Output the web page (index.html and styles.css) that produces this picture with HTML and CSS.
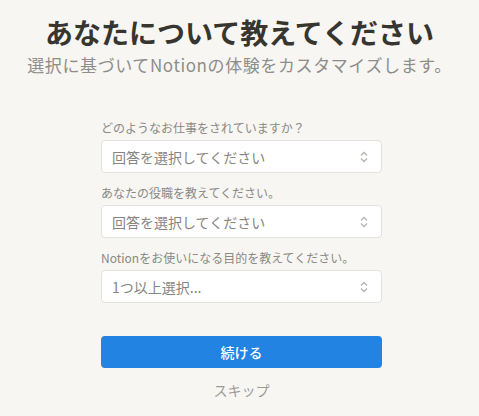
FILE: index.html
```html
<!DOCTYPE html>
<html lang="ja">
<head>
    <meta charset="UTF-8">
    <meta name="viewport" content="width=device-width, initial-scale=1.0">
    <title>あなたについて教えてください</title>
    <link rel="stylesheet" href="styles.css">
</head>
<body>
    <div class="page">
        <h1 class="title">あなたについて教えてください</h1>
        <p class="subtitle">選択に基づいてNotionの体験をカスタマイズします。</p>

        <form class="survey">
            <div class="field">
                <label class="field-label">どのようなお仕事をされていますか？</label>
                <div class="select">
                    <span>回答を選択してください</span>
                    <svg class="chevrons" width="10" height="12" viewBox="0 0 10 12"><path d="M2 4.5L5 1.5L8 4.5M2 7.5L5 10.5L8 7.5" fill="none" stroke="#b4b3b0" stroke-width="1.3"/></svg>
                </div>
            </div>
            <div class="field">
                <label class="field-label">あなたの役職を教えてください。</label>
                <div class="select">
                    <span>回答を選択してください</span>
                    <svg class="chevrons" width="10" height="12" viewBox="0 0 10 12"><path d="M2 4.5L5 1.5L8 4.5M2 7.5L5 10.5L8 7.5" fill="none" stroke="#b4b3b0" stroke-width="1.3"/></svg>
                </div>
            </div>
            <div class="field">
                <label class="field-label">Notionをお使いになる目的を教えてください。</label>
                <div class="select">
                    <span>1つ以上選択...</span>
                    <svg class="chevrons" width="10" height="12" viewBox="0 0 10 12"><path d="M2 4.5L5 1.5L8 4.5M2 7.5L5 10.5L8 7.5" fill="none" stroke="#b4b3b0" stroke-width="1.3"/></svg>
                </div>
            </div>

            <button type="button" class="continue">続ける</button>
            <div class="skip">スキップ</div>
        </form>
    </div>
</body>
</html>
```

FILE: styles.css
```css
body {
    margin: 0;
    background: #f7f6f3;
    color: #37352f;
    font-family: "Noto Sans CJK JP", "Noto Sans", sans-serif;
}

.page {
    display: flex;
    flex-direction: column;
    align-items: center;
    padding-top: 14px;
}

.title {
    margin: 0;
    font-size: 28px;
    font-weight: 700;
    line-height: 36px;
    color: #37352f;
}

.subtitle {
    margin: 3px 0 0;
    font-size: 17px;
    letter-spacing: 0.6px;
    line-height: 24px;
    color: #8e8d8a;
}

.survey {
    width: 281px;
    margin: 43px 0 0 4px;
    display: flex;
    flex-direction: column;
}

.field {
    margin-bottom: 12px;
}

.field-label {
    display: block;
    font-size: 12px;
    line-height: 16px;
    color: #8a8985;
    margin-bottom: 4px;
}

.select {
    height: 33px;
    box-sizing: border-box;
    background: #fff;
    border: 1px solid #e3e2df;
    border-radius: 4px;
    padding: 0 12px 0 10px;
    display: flex;
    align-items: center;
    justify-content: space-between;
    font-size: 14px;
    color: #86857f;
}

.continue {
    margin-top: 21px;
    height: 32px;
    border: none;
    border-radius: 4px;
    background: #2383e2;
    color: #fff;
    font-family: inherit;
    font-size: 14px;
    font-weight: 500;
}

.skip {
    text-align: center;
    margin-top: 12px;
    font-size: 14px;
    color: #9b9a97;
}
```
